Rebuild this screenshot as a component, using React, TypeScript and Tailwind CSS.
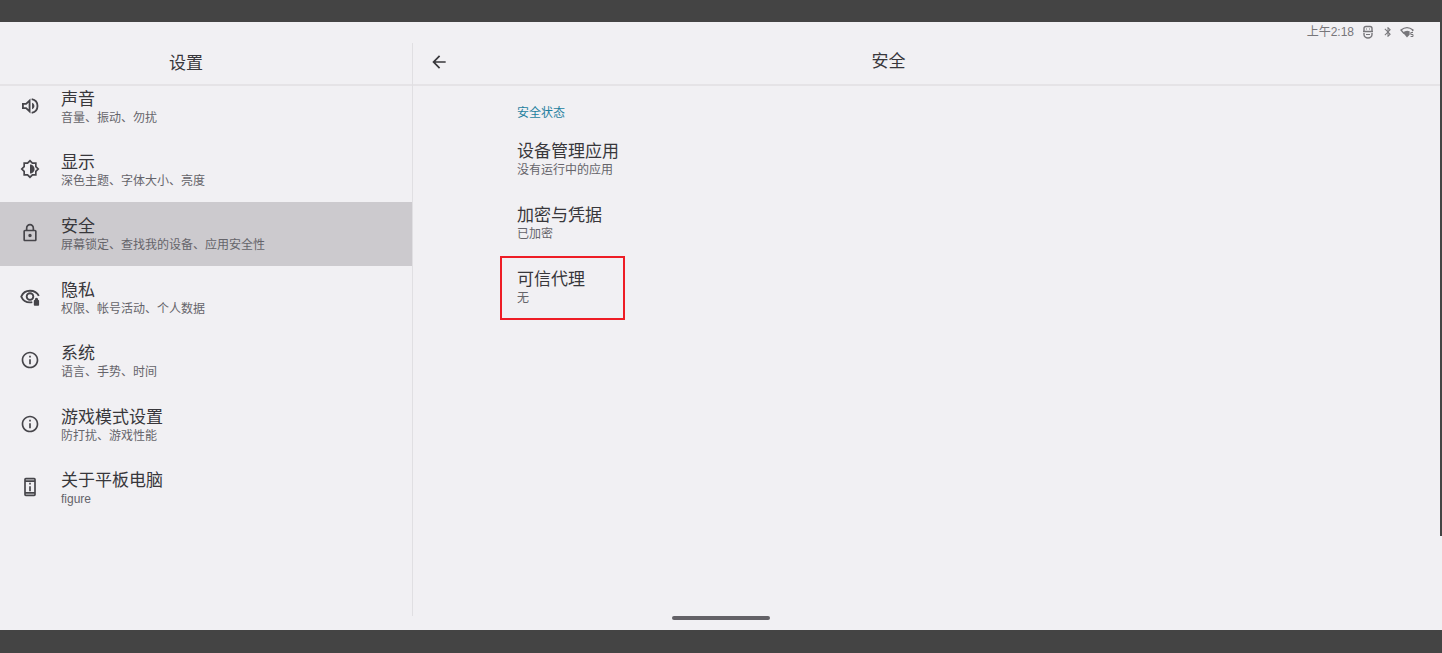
import React from "react";
import { IconType } from "react-icons";
import {
  MdArrowBack,
  MdBluetooth,
  MdInfoOutline,
  MdOutlineBrightness6,
  MdOutlineLock,
  MdOutlinePermDeviceInformation,
} from "react-icons/md";

interface IconProps {
  className?: string;
}

interface SettingItem {
  title: string;
  summary: string;
  icon: IconType | React.FC<IconProps>;
  active?: boolean;
}

interface Preference {
  title: string;
  summary: string;
  highlighted?: boolean;
}

const SoundIcon: React.FC<IconProps> = ({ className }) => (
  <svg viewBox="0 0 24 24" fill="none" className={className} aria-hidden="true">
    <path
      d="M3.500 9.500v5h3.800L11.500 18.500v-13L7.300 9.500z"
      stroke="currentColor"
      strokeWidth="2.200"
    />
    <path d="M14 3.800c4 .8 7 4 7 8.200s-3 7.400-7 8.200" stroke="currentColor" strokeWidth="2.200" />
    <path d="M14.500 8c1.700.7 2.800 2.200 2.800 4s-1.100 3.300-2.800 4z" fill="currentColor" />
  </svg>
);

const PrivacyIcon: React.FC<IconProps> = ({ className }) => (
  <svg viewBox="0 0 24 24" fill="none" className={className} aria-hidden="true">
    <path
      d="M22.600 10.600C20.800 7 16.900 4.500 12 4.500 7.200 4.500 3.300 7.300 1.500 11.500c1.800 4.200 5.700 7 10.500 7 .9 0 1.800-.1 2.700-.3"
      stroke="currentColor"
      strokeWidth="2.200"
    />
    <circle cx="12" cy="11.500" r="4" stroke="currentColor" strokeWidth="2.200" />
    <path
      d="M22 15.500h-.3V14.800a1.900 1.900 0 0 0-3.800 0v.7h-.4a.9.9 0 0 0-.9.9v5.200c0 .5.4.9.9.9H22c.5 0 .9-.4.9-.9v-5.200a.9.9 0 0 0-.9-.9z"
      fill="currentColor"
    />
  </svg>
);

const DebugIcon: React.FC<IconProps> = ({ className }) => (
  <svg viewBox="0 0 12 14" fill="none" stroke="currentColor" className={className} aria-hidden="true">
    <path d="M2 6V3.500Q2 1.500 4 1.500h4Q10 1.500 10 3.500V6M1 6.500h10M2 8v1.500a4 3.500 0 0 0 8 0V8" strokeWidth="1.400" />
    <path d="M4 4h1M7 4h1M4 9.500h4" strokeWidth="1.200" />
  </svg>
);

const WifiIcon: React.FC<IconProps> = ({ className }) => (
  <svg viewBox="0 0 14 12" fill="none" className={className} aria-hidden="true">
    <path d="M4 7.500 1 4Q7-.8 13 4L12.200 5" stroke="currentColor" strokeWidth="1.300" />
    <path d="M7 11.500 2.800 6.500Q6 3.800 9.600 5.200V8.800z" fill="currentColor" />
    <path d="M13 6.500h-2.200v2H13v2h-2.400" stroke="currentColor" strokeWidth="1" />
  </svg>
);

const settings: SettingItem[] = [
  { title: "声音", summary: "音量、振动、勿扰", icon: SoundIcon },
  { title: "显示", summary: "深色主题、字体大小、亮度", icon: MdOutlineBrightness6 },
  { title: "安全", summary: "屏幕锁定、查找我的设备、应用安全性", icon: MdOutlineLock, active: true },
  { title: "隐私", summary: "权限、帐号活动、个人数据", icon: PrivacyIcon },
  { title: "系统", summary: "语言、手势、时间", icon: MdInfoOutline },
  { title: "游戏模式设置", summary: "防打扰、游戏性能", icon: MdInfoOutline },
  { title: "关于平板电脑", summary: "figure", icon: MdOutlinePermDeviceInformation },
];

const preferences: Preference[] = [
  { title: "设备管理应用", summary: "没有运行中的应用" },
  { title: "加密与凭据", summary: "已加密" },
  { title: "可信代理", summary: "无", highlighted: true },
];

const StatusBar: React.FC = () => (
  <div className="flex h-[21px] items-center justify-end pb-px pr-7 text-xs text-[#77767a]">
    <span>上午2:18</span>
    <DebugIcon className="ml-2 h-3.5 w-3" />
    <MdBluetooth className="ml-2 h-3 w-3" />
    <WifiIcon className="ml-1.5 h-3 w-3.5" />
  </div>
);

const Sidebar: React.FC = () => (
  <aside className="flex w-[413px] shrink-0 flex-col border-r border-[#e0dfe2]">
    <header className="z-10 flex h-[43px] items-center justify-center border-b-2 border-[#e5e3e6] bg-[#f1f0f3] pr-10">
      <h1 className="text-[17px] leading-6">设置</h1>
    </header>
    <nav className="-mt-[11px]">
      <ul className="flex h-[445px] flex-col">
        {settings.map(({ title, summary, icon: Icon, active }) => (
          <li key={title} className="flex-1">
            <a
              href="#"
              aria-current={active ? "page" : undefined}
              className={`flex h-full items-center pb-0.5 pl-5 ${active ? "bg-[#cccace]" : ""}`}
            >
              <Icon className="h-5 w-5 shrink-0 text-[#46454a]" />
              <span className="ml-[21px] flex flex-col pt-1">
                <span className="text-[17px] leading-5">{title}</span>
                <span className="text-xs text-[#65646a]">{summary}</span>
              </span>
            </a>
          </li>
        ))}
      </ul>
    </nav>
  </aside>
);

const SecurityPage: React.FC = () => (
  <main className="flex flex-1 flex-col">
    <header className="flex h-[43px] items-center border-b-2 border-[#e5e3e6] pb-1 pl-4">
      <button type="button" aria-label="返回" className="shrink-0">
        <MdArrowBack className="h-5 w-5" />
      </button>
      <h2 className="flex-1 pr-[114px] text-center text-[17px] leading-6">安全</h2>
    </header>
    <section className="pl-[87px] pt-[18px]">
      <h3 className="pl-[17px] text-xs leading-[18px] text-[#1f7f9f]">安全状态</h3>
      <ul className="mt-1.5 flex flex-col">
        {preferences.map(({ title, summary, highlighted }) => (
          <li key={title} className="flex h-16">
            <a
              href="#"
              className={`flex flex-col justify-center border-2 pl-[15px] ${
                highlighted ? "w-[125px] border-[#ee1c25]" : "border-transparent"
              }`}
            >
              <span className="text-[17px] leading-5">{title}</span>
              <span className="text-xs text-[#65646a]">{summary}</span>
            </a>
          </li>
        ))}
      </ul>
    </section>
  </main>
);

const App: React.FC = () => {
  return (
    <div className="flex min-h-screen flex-col bg-[#444444] pb-[23px] pt-[22px] font-['Liberation_Sans','Noto_Sans_CJK_SC',sans-serif] text-[#38373b]">
      <div className="relative flex flex-1 flex-col bg-[#f1f0f3]">
        <StatusBar />
        <div className="flex flex-1">
          <Sidebar />
          <SecurityPage />
        </div>
        <div className="flex h-3.5 justify-center">
          <div className="h-1 w-[98px] rounded-full bg-[#636166]" />
        </div>
        <div className="absolute right-0 top-0 h-[514px] w-0.5 bg-[#444444]" />
      </div>
    </div>
  );
};

export default App;
